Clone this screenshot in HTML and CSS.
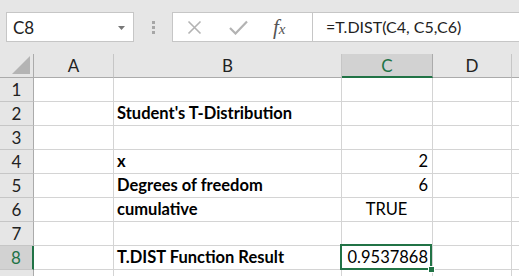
FILE: index.html
```html
<!DOCTYPE html>
<html>
<head>
<meta charset="utf-8">
<title>T.DIST</title>
<link rel="stylesheet" href="styles.css">
</head>
<body>
<div class="app">
	<div class="toolbar">
		<div class="namebox">
			<span>C8</span>
			<svg class="arrow" width="7" height="4" viewBox="0 0 7 4"><path d="M0 0H7L3.5 4Z" fill="#777"/></svg>
		</div>
		<div class="grip"><i></i><i></i><i></i></div>
		<div class="formula">
			<div class="fbtns">
				<svg class="ico" width="15" height="15" viewBox="0 0 15 15"><path d="M1.5 1.5L13.5 13.5M13.5 1.5L1.5 13.5" stroke="#b3b3b3" stroke-width="1.6" fill="none"/></svg>
				<svg class="ico" width="19" height="15" viewBox="0 0 19 15"><path d="M1 8L6.5 13.5L18 1.5" stroke="#b3b3b3" stroke-width="2.2" fill="none"/></svg>
				<span class="fx">f<sub>x</sub></span>
			</div>
			<div class="ftext">=T.DIST(C4, C5,C6)</div>
		</div>
	</div>

	<div class="sheet">
		<div class="hd corner"><svg width="18" height="18" viewBox="0 0 18 18"><path d="M18 0V18H0Z" fill="#b4b4b4"/></svg></div>
		<div class="hd">A</div>
		<div class="hd">B</div>
		<div class="hd sel-col">C</div>
		<div class="hd">D</div>
		<div class="hd last"></div>

		<div class="rh">1</div><div class="c"></div><div class="c"></div><div class="c"></div><div class="c"></div><div class="c"></div>
		<div class="rh">2</div><div class="c"></div><div class="c b">Student's T-Distribution</div><div class="c"></div><div class="c"></div><div class="c"></div>
		<div class="rh">3</div><div class="c"></div><div class="c"></div><div class="c"></div><div class="c"></div><div class="c"></div>
		<div class="rh">4</div><div class="c"></div><div class="c b">x</div><div class="c num">2</div><div class="c"></div><div class="c"></div>
		<div class="rh">5</div><div class="c"></div><div class="c b">Degrees of freedom</div><div class="c num">6</div><div class="c"></div><div class="c"></div>
		<div class="rh">6</div><div class="c"></div><div class="c b">cumulative</div><div class="c mid">TRUE</div><div class="c"></div><div class="c"></div>
		<div class="rh">7</div><div class="c"></div><div class="c"></div><div class="c"></div><div class="c"></div><div class="c"></div>
		<div class="rh sel-row">8</div><div class="c"></div><div class="c b">T.DIST Function Result</div><div class="c num active">0.9537868<span class="handle"></span></div><div class="c"></div><div class="c"></div>
		<div class="rh"></div><div class="c"></div><div class="c"></div><div class="c"></div><div class="c"></div><div class="c"></div>
	</div>
</div>
</body>
</html>
```

FILE: styles.css
```css
*{margin:0;padding:0;box-sizing:border-box;}
body{margin:0;background:#fff;font-family:Lato,"Liberation Sans",sans-serif;color:#000;overflow:hidden;}
.app{width:519px;height:276px;overflow:hidden;}

/* formula bar */
.toolbar{height:54px;background:#e6e6e6;padding:12px 0 0 6px;display:flex;align-items:flex-start;}
.namebox{width:128px;height:30px;background:#fff;border:1px solid #c6c6c6;display:flex;align-items:center;justify-content:space-between;padding:0 8px 0 6px;font-size:17px;color:#222;}
.arrow{margin-top:1px;}
.grip{width:38px;height:30px;display:flex;flex-direction:column;align-items:center;justify-content:center;gap:2px;}
.grip i{display:block;width:3px;height:3px;background:#a6a6a6;}
.formula{flex:1;height:30px;background:#fff;border:1px solid #c6c6c6;border-right:none;display:flex;}
.fbtns{width:140px;border-right:1px solid #c6c6c6;display:flex;align-items:center;padding-left:14px;gap:27px;}
.fx{font-family:"Liberation Serif",serif;font-style:italic;font-size:21px;color:#555;margin-left:-2px;}
.fx sub{font-size:15px;vertical-align:baseline;}
.ftext{padding-left:13px;font-size:16px;line-height:28px;color:#222;}

/* grid */
.sheet{display:grid;grid-template-columns:34px 80px 228px 91px 79px 1fr;grid-auto-rows:24px;}
.hd{background:#e6e6e6;border-right:1px solid #c6c6c6;border-bottom:1px solid #ababab;text-align:center;font-size:17px;line-height:23px;color:#222;}
.hd.corner{border-right:1px solid #ababab;display:flex;align-items:flex-end;justify-content:flex-end;padding:0 3px 3px 0;}
.hd.sel-col{background:#d2d2d2;color:#217346;border-bottom:2px solid #217346;border-right-color:#ababab;}
.hd.last{border-right:none;}
.rh{background:#e6e6e6;border-right:1px solid #ababab;border-bottom:1px solid #c6c6c6;text-align:center;font-size:17px;line-height:23px;color:#222;}
.rh.sel-row{background:#d2d2d2;color:#217346;border-right:2px solid #217346;}
.c{border-right:1px solid #d4d4d4;border-bottom:1px solid #d4d4d4;font-size:16.5px;line-height:23px;padding:0 4px 0 3px;white-space:nowrap;}
.c.b{font-weight:bold;}
.c.num{text-align:right;}
.c.mid{text-align:center;}
.c.active{position:relative;}
.c.active::after{content:"";position:absolute;left:-2px;top:-2px;right:0;bottom:-1px;border:2px solid #217346;}
.handle{position:absolute;right:-3px;bottom:-4px;width:7px;height:7px;background:#217346;border:1px solid #fff;z-index:1;}
```
